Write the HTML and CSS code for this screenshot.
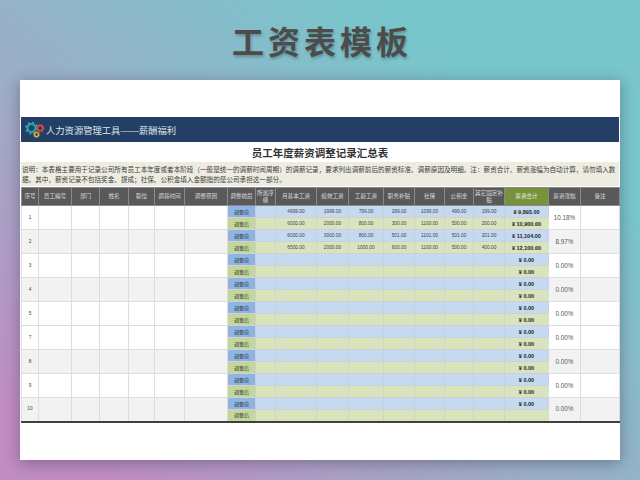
FILE: index.html
```html
<!doctype html>
<html>
  <head>
    <meta charset="utf-8">
    <title>工资表模板</title>
    <link rel="stylesheet" href="styles.css">
  </head>
  <body>
    <h1 class="page-title">工资表模板</h1>

    <section class="sheet">
      <div class="banner">
        <svg class="gears" width="20" height="18" viewBox="0 0 20 18">
          <circle cx="6.5" cy="7" r="4" fill="none" stroke="#2aa9b8" stroke-width="2"/>
          <circle cx="6.5" cy="7" r="5.6" fill="none" stroke="#2aa9b8" stroke-width="1.6" stroke-dasharray="2 2.4"/>
          <circle cx="15.2" cy="7.2" r="2.6" fill="none" stroke="#d9513f" stroke-width="1.5"/>
          <circle cx="15.2" cy="7.2" r="3.8" fill="none" stroke="#d9513f" stroke-width="1" stroke-dasharray="1.4 1.6"/>
          <circle cx="11.5" cy="13.6" r="2" fill="none" stroke="#e8b52e" stroke-width="1.3"/>
          <circle cx="11.5" cy="13.6" r="3" fill="none" stroke="#e8b52e" stroke-width="0.8" stroke-dasharray="1.1 1.2"/>
        </svg>
        <span>人力资源管理工具——薪酬福利</span>
      </div>

      <h2 class="sheet-title">员工年度薪资调整记录汇总表</h2>

      <p class="notes">说明：本表格主要用于记录公司所有员工本年度或者本阶段（一般是统一的调薪时间周期）的调薪记录，要求列出调薪前后的薪资标准、调薪原因及明细。注：薪资合计、薪资涨幅为自动计算，请勿填入数<br>据。其中，薪资记录不包括奖金、提成；社保、公积金填入金额指的是公司承担这一部分。</p>

      <table class="salary">
        <colgroup>
          <col style="width:17px"><col style="width:33px"><col style="width:28px"><col style="width:29px"><col style="width:26px"><col style="width:30px"><col style="width:43px">
          <col style="width:28px"><col style="width:20px"><col style="width:41px"><col style="width:32px"><col style="width:35px"><col style="width:31px"><col style="width:30px"><col style="width:29px"><col style="width:31px">
          <col style="width:44px"><col style="width:32px"><col style="width:39px">
        </colgroup>
        <thead>
          <tr>
            <th>序号</th><th>员工编号</th><th>部门</th><th>姓名</th><th>职位</th><th>调薪时间</th><th>调整原因</th>
            <th>调整前后</th><th>所属序级</th><th>月基本工资</th><th>绩效工资</th><th>工龄工资</th><th>职务补贴</th><th>社保</th><th>公积金</th><th>其它固定补贴</th>
            <th class="total-head">薪资合计</th><th>薪资涨幅</th><th>备注</th>
          </tr>
        </thead>
        <tbody>
          <tr class="before"><td rowspan="2" class="info">1</td><td rowspan="2" class="info"></td><td rowspan="2" class="info"></td><td rowspan="2" class="info"></td><td rowspan="2" class="info"></td><td rowspan="2" class="info"></td><td rowspan="2" class="info"></td>
            <td class="tag">调整前</td><td></td><td>4999.00</td><td>1999.00</td><td>799.00</td><td>299.00</td><td>1099.00</td><td>499.00</td><td>199.00</td><td class="total">¥ 9,893.00</td><td rowspan="2" class="rate">10.18%</td><td rowspan="2" class="info"></td></tr>
          <tr class="after"><td class="tag">调整后</td><td></td><td>6000.00</td><td>2000.00</td><td>800.00</td><td>300.00</td><td>1100.00</td><td>500.00</td><td>200.00</td><td class="total">¥ 10,900.00</td></tr>

          <tr class="before even"><td rowspan="2" class="info">2</td><td rowspan="2" class="info"></td><td rowspan="2" class="info"></td><td rowspan="2" class="info"></td><td rowspan="2" class="info"></td><td rowspan="2" class="info"></td><td rowspan="2" class="info"></td>
            <td class="tag">调整前</td><td></td><td>6000.00</td><td>3000.00</td><td>800.00</td><td>501.00</td><td>1101.00</td><td>501.00</td><td>201.00</td><td class="total">¥ 11,104.00</td><td rowspan="2" class="rate">8.97%</td><td rowspan="2" class="info"></td></tr>
          <tr class="after"><td class="tag">调整后</td><td></td><td>6500.00</td><td>2000.00</td><td>1000.00</td><td>600.00</td><td>1100.00</td><td>500.00</td><td>400.00</td><td class="total">¥ 12,100.00</td></tr>

          <tr class="before"><td rowspan="2" class="info">3</td><td rowspan="2" class="info"></td><td rowspan="2" class="info"></td><td rowspan="2" class="info"></td><td rowspan="2" class="info"></td><td rowspan="2" class="info"></td><td rowspan="2" class="info"></td>
            <td class="tag">调整前</td><td></td><td></td><td></td><td></td><td></td><td></td><td></td><td></td><td class="total">¥ 0.00</td><td rowspan="2" class="rate">0.00%</td><td rowspan="2" class="info"></td></tr>
          <tr class="after"><td class="tag">调整后</td><td></td><td></td><td></td><td></td><td></td><td></td><td></td><td></td><td class="total">¥ 0.00</td></tr>

          <tr class="before even"><td rowspan="2" class="info">4</td><td rowspan="2" class="info"></td><td rowspan="2" class="info"></td><td rowspan="2" class="info"></td><td rowspan="2" class="info"></td><td rowspan="2" class="info"></td><td rowspan="2" class="info"></td>
            <td class="tag">调整前</td><td></td><td></td><td></td><td></td><td></td><td></td><td></td><td></td><td class="total">¥ 0.00</td><td rowspan="2" class="rate">0.00%</td><td rowspan="2" class="info"></td></tr>
          <tr class="after"><td class="tag">调整后</td><td></td><td></td><td></td><td></td><td></td><td></td><td></td><td></td><td class="total">¥ 0.00</td></tr>

          <tr class="before"><td rowspan="2" class="info">5</td><td rowspan="2" class="info"></td><td rowspan="2" class="info"></td><td rowspan="2" class="info"></td><td rowspan="2" class="info"></td><td rowspan="2" class="info"></td><td rowspan="2" class="info"></td>
            <td class="tag">调整前</td><td></td><td></td><td></td><td></td><td></td><td></td><td></td><td></td><td class="total">¥ 0.00</td><td rowspan="2" class="rate">0.00%</td><td rowspan="2" class="info"></td></tr>
          <tr class="after"><td class="tag">调整后</td><td></td><td></td><td></td><td></td><td></td><td></td><td></td><td></td><td class="total">¥ 0.00</td></tr>

          <tr class="before"><td rowspan="2" class="info">7</td><td rowspan="2" class="info"></td><td rowspan="2" class="info"></td><td rowspan="2" class="info"></td><td rowspan="2" class="info"></td><td rowspan="2" class="info"></td><td rowspan="2" class="info"></td>
            <td class="tag">调整前</td><td></td><td></td><td></td><td></td><td></td><td></td><td></td><td></td><td class="total">¥ 0.00</td><td rowspan="2" class="rate">0.00%</td><td rowspan="2" class="info"></td></tr>
          <tr class="after"><td class="tag">调整后</td><td></td><td></td><td></td><td></td><td></td><td></td><td></td><td></td><td class="total">¥ 0.00</td></tr>

          <tr class="before even"><td rowspan="2" class="info">8</td><td rowspan="2" class="info"></td><td rowspan="2" class="info"></td><td rowspan="2" class="info"></td><td rowspan="2" class="info"></td><td rowspan="2" class="info"></td><td rowspan="2" class="info"></td>
            <td class="tag">调整前</td><td></td><td></td><td></td><td></td><td></td><td></td><td></td><td></td><td class="total">¥ 0.00</td><td rowspan="2" class="rate">0.00%</td><td rowspan="2" class="info"></td></tr>
          <tr class="after"><td class="tag">调整后</td><td></td><td></td><td></td><td></td><td></td><td></td><td></td><td></td><td class="total">¥ 0.00</td></tr>

          <tr class="before"><td rowspan="2" class="info">9</td><td rowspan="2" class="info"></td><td rowspan="2" class="info"></td><td rowspan="2" class="info"></td><td rowspan="2" class="info"></td><td rowspan="2" class="info"></td><td rowspan="2" class="info"></td>
            <td class="tag">调整前</td><td></td><td></td><td></td><td></td><td></td><td></td><td></td><td></td><td class="total">¥ 0.00</td><td rowspan="2" class="rate">0.00%</td><td rowspan="2" class="info"></td></tr>
          <tr class="after"><td class="tag">调整后</td><td></td><td></td><td></td><td></td><td></td><td></td><td></td><td></td><td class="total">¥ 0.00</td></tr>

          <tr class="before even"><td rowspan="2" class="info">10</td><td rowspan="2" class="info"></td><td rowspan="2" class="info"></td><td rowspan="2" class="info"></td><td rowspan="2" class="info"></td><td rowspan="2" class="info"></td><td rowspan="2" class="info"></td>
            <td class="tag">调整前</td><td></td><td></td><td></td><td></td><td></td><td></td><td></td><td></td><td class="total">¥ 0.00</td><td rowspan="2" class="rate">0.00%</td><td rowspan="2" class="info"></td></tr>
          <tr class="after"><td class="tag">调整后</td><td></td><td></td><td></td><td></td><td></td><td></td><td></td><td></td><td class="total"></td></tr>
        </tbody>
      </table>
    </section>
  </body>
</html>
```

FILE: styles.css
```css
html, body {
  margin: 0;
  padding: 0;
}

body {
  width: 640px;
  height: 480px;
  overflow: hidden;
  font-family: "Liberation Sans", "Noto Sans CJK SC", sans-serif;
  background: linear-gradient(38deg, #c08cc3 8%, #9eacc8 40%, #78c6cb 78%);
}

.page-title {
  height: 80px;
  margin: 0;
  display: flex;
  align-items: center;
  justify-content: center;
  font-size: 32px;
  font-weight: 700;
  letter-spacing: 4px;
  text-indent: 4px;
  color: #4c4c4c;
  text-shadow: 1px 2px 3px rgba(0, 0, 0, 0.25);
}

.sheet {
  width: 600px;
  height: 380px;
  margin: 0 20px;
  padding-top: 37px;
  box-sizing: border-box;
  background: #ffffff;
  box-shadow: 0 3px 14px rgba(60, 50, 80, 0.45);
}

.banner {
  height: 25px;
  margin: 0 1px;
  padding-left: 4px;
  display: flex;
  align-items: center;
  gap: 1px;
  background: #243f66;
  color: #dfe4ea;
  font-size: 9.3px;
}

.sheet-title {
  height: 20px;
  margin: 0;
  display: flex;
  align-items: center;
  justify-content: center;
  font-size: 10.5px;
  font-weight: 700;
  color: #333333;
}

.notes {
  height: 24px;
  margin: 0 1px 1px;
  padding: 3px 1px 0;
  box-sizing: border-box;
  background: #eeece1;
  font-size: 6.6px;
  line-height: 9.5px;
  white-space: nowrap;
  color: #3c3c3c;
}

.salary {
  width: 598px;
  margin-left: 1px;
  table-layout: fixed;
  border-collapse: collapse;
  border-top: 1px solid #333333;
  border-right: 1px solid #7f7f7f;
  border-bottom: 2px solid #404040;
  font-size: 4.8px;
  text-align: center;
}

.salary th {
  height: 17px;
  padding: 0 1px;
  background: #595959;
  border: 1px solid #8a8a8a;
  color: #d9d9d9;
  font-size: 5.6px;
  font-weight: 400;
  line-height: 7px;
}

.salary th.total-head {
  background: #76933c;
  color: #e8efd8;
}

.salary td {
  height: 12px;
  padding: 0;
  box-sizing: border-box;
  border: 1px solid #cfcfd4;
  color: #444444;
  line-height: 10px;
  overflow: hidden;
  white-space: nowrap;
}

.salary .before td {
  background: #c5d9f1;
}

.salary .after td {
  background: #d8e4bc;
}

.salary td.info,
.salary td.rate {
  background: #ffffff;
  border-color: #dddddd;
}

.salary .even td.info,
.salary .even td.rate {
  background: #f2f2f2;
}

.salary td.rate {
  font-size: 6.3px;
  color: #595959;
}

.salary .before td.tag {
  background: #8db4e2;
}

.salary .after td.tag {
  background: #c4d79b;
}

.salary td.tag {
  font-size: 5px;
  color: #333333;
}

.salary td.total {
  font-size: 5.5px;
  font-weight: 700;
  color: #222222;
}
```
